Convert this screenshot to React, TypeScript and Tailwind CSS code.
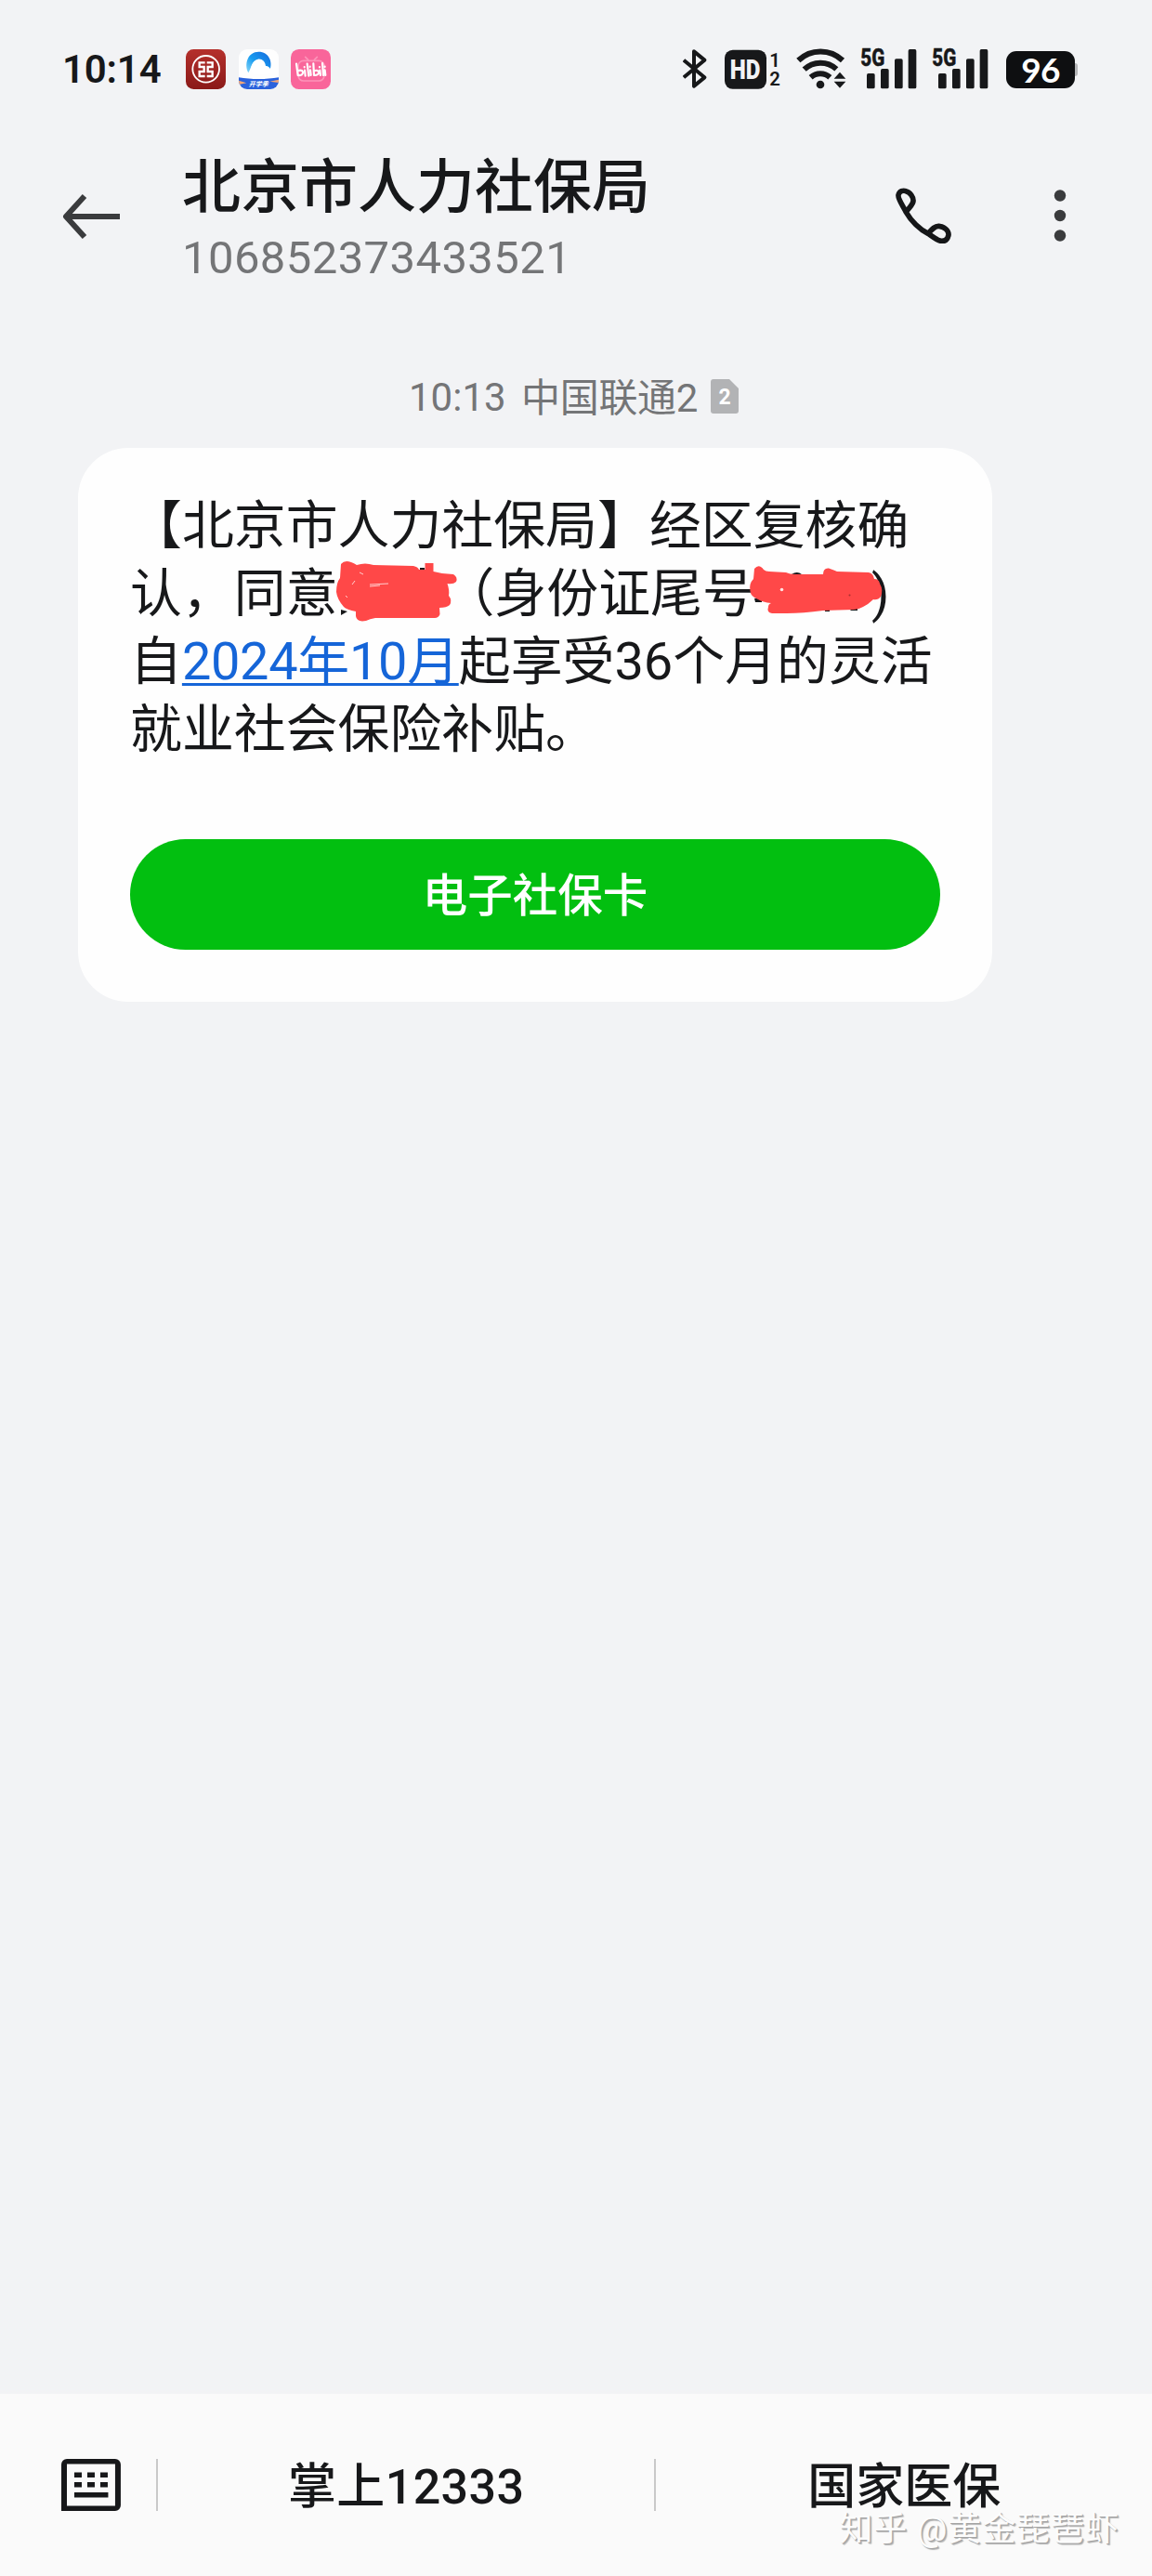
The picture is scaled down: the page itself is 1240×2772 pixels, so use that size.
import React from 'react';

function IcbcIcon() {
  return (
    <svg viewBox="0 0 129 129" className="w-[43px] h-[43px]">
      <defs>
        <linearGradient id="icbc" x1="0" y1="0" x2="0" y2="1">
          <stop offset="0" stopColor="#b5302c" />
          <stop offset="1" stopColor="#8a1a18" />
        </linearGradient>
      </defs>
      <rect width="129" height="129" rx="25" fill="url(#icbc)" />
      <circle cx="65" cy="64" r="43" fill="none" stroke="#fff" strokeWidth="5.500" />
      <g fill="none" stroke="#fff" strokeWidth="7">
        <path d="M62 43H44v14h15v15H44v15h18M68 43h18v14H71v15h15v15H68" />
      </g>
    </svg>
  );
}

function BrowserIcon() {
  return (
    <svg viewBox="0 0 129 129" className="w-[43px] h-[43px]">
      <defs>
        <linearGradient id="ring" x1="0" y1="1" x2="1" y2="0">
          <stop offset="0" stopColor="#8ad8f8" />
          <stop offset="0.45" stopColor="#189cf0" />
          <stop offset="1" stopColor="#1767dc" />
        </linearGradient>
        <clipPath id="browserClip">
          <rect width="129" height="129" rx="27" />
        </clipPath>
      </defs>
      <g clipPath="url(#browserClip)">
        <rect width="129" height="129" fill="#fefefe" />
        <path d="M31 76C16 47 30 8 64 8c33 0 46 32 37 57-5-8-9-10-14-11-2-15-12-24-25-22-20 4-21 28-31 44z" fill="url(#ring)" />
        <path d="M47 80c-12-12-8-42 14-44 12-1 21 7 23 19 11-2 19 5 19 14 0 9-7 13-15 13z" fill="#fff" />
        <path d="M0 91c40 7 89 7 129 0v38H0z" fill="#2a62dc" />
        <path d="M0 101l25 8-25 5zM129 98l-29 6 29 4z" fill="#f3a778" />
        <text x="64" y="120" textAnchor="middle" fontSize="21" fontWeight="700" fontStyle="italic" fill="#fff" fontFamily="'Noto Sans CJK SC', sans-serif">开学季</text>
      </g>
    </svg>
  );
}

function BiliIcon() {
  return (
    <svg viewBox="0 0 129 129" className="w-[43px] h-[43px]">
      <rect width="129" height="129" rx="26" fill="#f9659a" />
      <g fill="none" stroke="#fd94b9" strokeWidth="5" strokeLinecap="round">
        <path d="M47 25l9 9M85 25l-9 9" />
        <rect x="24" y="37" width="84" height="65" rx="17" />
      </g>
      <g fill="none" stroke="#fff" strokeWidth="6.500" strokeLinecap="round" strokeLinejoin="round">
        <path d="M18 47l5 37c10 2 18-4 16-11-2-5-9-6-17-3M45 68l2 18M53 47l5 39M63 67l2 17M44 57v1M62 56v1" />
        <path d="M73 46l2 38c11 1 17-6 15-11-2-5-8-6-15-3M94 68l2 16M102 45l3 39M110 67l2 17M93 57v1M110 56v1" />
      </g>
    </svg>
  );
}

function SignalIcon() {
  return (
    <svg viewBox="0 0 183 132" className="w-[61px] h-[44px] overflow-visible" fill="#17181a">
      <text x="1" y="56" fontSize="76" fontWeight="800" stroke="#17181a" strokeWidth="1.500" textLength="78" lengthAdjust="spacingAndGlyphs" fontFamily="Roboto, sans-serif">5G</text>
      <rect x="21" y="81" width="26" height="49" rx="5" />
      <rect x="66" y="66" width="26" height="64" rx="5" />
      <rect x="111" y="34" width="26" height="96" rx="5" />
      <rect x="155" y="3" width="26" height="127" rx="5" />
    </svg>
  );
}

function StatusBar() {
  return (
    <div className="flex items-center justify-between h-[44px] mt-[52px] pl-[67px] pr-20">
      <div className="flex items-center">
        <span className="w-[133px] pt-px text-[42px] leading-[44px] font-semibold tracking-[-0.2px] text-[#17181a]">10:14</span>
        <div className="flex items-center gap-[13.5px]">
          <IcbcIcon />
          <BrowserIcon />
          <BiliIcon />
        </div>
      </div>
      <div className="flex items-center">
        <svg viewBox="46 68 78 132" className="w-[26px] h-[44px]" fill="none" stroke="#17181a" strokeWidth="12" strokeLinejoin="round">
          <path d="M49 106L116 162L82 190V78L116 106L49 162" />
        </svg>
        <svg viewBox="0 0 180 132" className="w-[60px] h-[44px] ml-[19px]" fill="#17181a">
          <rect x="0" y="5" width="135" height="126" rx="26" />
          <text x="17" y="99" fontSize="86" fontWeight="900" fill="#f2f3f5" textLength="98" lengthAdjust="spacingAndGlyphs" fontFamily="Roboto, sans-serif">HD</text>
          <text x="145" y="59" fontSize="61" fontWeight="600" fontFamily="Roboto, sans-serif">1</text>
          <text x="145" y="120" fontSize="61" fontWeight="600" fontFamily="Roboto, sans-serif">2</text>
        </svg>
        <svg viewBox="411 66 162 132" className="w-[54px] h-[44px] ml-[17px]">
          <g fill="none" stroke="#17181a" strokeWidth="18">
            <path d="M418 105a103 103 0 0 1 143 0" />
            <path d="M437 134a76 76 0 0 1 104 -1" />
            <path d="M458 160a46 46 0 0 1 62 0" />
          </g>
          <circle cx="489" cy="183" r="13" fill="#17181a" />
          <path d="M552 143l19 21h-38zM552 194l19-21h-38z" fill="#17181a" />
        </svg>
        <div className="flex gap-4 ml-[15px]">
          <SignalIcon />
          <SignalIcon />
        </div>
        <div className="flex items-center ml-[19px] mt-[2px]">
          <div className="flex items-center justify-center w-[74px] h-10 rounded-[11px] bg-[#0e0f11] text-white text-[37px] leading-10 tracking-[-0.8px] font-bold font-['Lato',sans-serif]">
            96
          </div>
          <div className="w-[3px] h-[14px] rounded-r-sm bg-[#b4b5b7]" />
        </div>
      </div>
    </div>
  );
}

function Header() {
  return (
    <header className="flex h-[142px] mt-[69px] pl-[67px]">
      <svg viewBox="0 0 64 50" className="w-16 h-[50px] mt-[43px]" fill="none" stroke="#3a3b3d" strokeWidth="6">
        <path d="M62 25H5" />
        <path d="M24 3L4 25L24 47" strokeLinejoin="round" />
      </svg>
      <div className="w-[768px] ml-[65px] whitespace-nowrap">
        <h1 className="text-[63px] leading-[74px] font-medium text-[#17181a]">北京市人力社保局</h1>
        <p className="mt-[10px] text-[49px] leading-[58px] tracking-[0.4px] text-[#747577]">106852373433521</p>
      </div>
      <svg viewBox="135 95 180 180" className="w-[60px] h-[60px] mt-[37px]" fill="none" stroke="#151618" strokeWidth="17" strokeLinejoin="round">
        <path d="M169 174C155 148 142 130 144 119C147 105 160 103 168 106C182 109 193 126 192 138C191 152 178 158 169 174C185 202 213 230 240 243C250 232 260 218 275 219C292 220 307 234 306 247C303 263 294 269 281 267C268 264 256 254 240 243" />
      </svg>
      <svg viewBox="0 0 14 58" className="w-[14px] h-[58px] mt-[39px] ml-[110px]" fill="#3a3b3d">
        <circle cx="7" cy="6.500" r="6.200" />
        <circle cx="7" cy="28" r="6.200" />
        <circle cx="7" cy="49.500" r="6.200" />
      </svg>
    </header>
  );
}

function NameScribble() {
  return (
    <span className="relative inline-block w-[113px]">
      <svg viewBox="360 600 135 70" className="absolute left-[-4px] top-[-58px] w-[135px] h-[70px]">
        <path d="M367 656l7 2-7 4zM452 611h5v4h-5z" fill="#17181a" />
        <path
          fill="#ff4848"
          d="M367 607Q371 602 378 605Q381 606 384 608Q393 605 402 608L445 609Q450 610 451 613L457.500 613V606H466.500V615Q477 618 488 618Q493 621 491 626Q488 629 481.500 628Q484 635 483 641Q487 646 484 651Q481 654 473 654L473.500 661Q472 665 468 665H404Q398 666 394 668Q384 670 383 663V658Q373 656 370 653Q363 645 362 637Q362 627 366 622Z"
        />
        <path d="M387 616l4 2M398 629l20-1M398 631l11-1M372 641l2 2M382 625l-3 4" stroke="#ffd0d0" strokeWidth="1" fill="none" />
      </svg>
    </span>
  );
}

function IdScribble() {
  return (
    <span className="relative inline-block w-[126px]">
      <svg viewBox="806 606 148 58" className="absolute left-[-7px] top-[-52px] w-[148px] h-[58px]">
        <path d="M853 618q6-4 11 0zM813 644h8v4h-7zM889 655h5v3h-5zM915 655h9v2h-7z" fill="#17181a" />
        <path
          fill="#ff4848"
          d="M813 612Q818 606 823 613Q825 615 829 615L847 616Q851 618 857 618H887Q887 611 893 611.500Q898 613 902 615L936 616Q941 617 942 623Q947 623 948 628Q952 635 949 642Q946 646 941 645Q936 650 930 653Q925 656 920 656L887 657Q865 660 848 660H832Q826 659 828 653Q828 650 831 649Q822 648 817 645Q809 642 808.500 636Q807 628 812 623Z"
        />
        <circle cx="842.500" cy="634.500" r="1.800" fill="#ffe2e2" />
        <circle cx="915.500" cy="640.500" r="1" fill="#a83030" />
      </svg>
    </span>
  );
}

function MessageCard() {
  return (
    <div className="w-[984px] h-[596px] ml-[84px] pt-12 px-14 rounded-[54px] bg-[#fefefe]">
      <p className="text-[55.9px] leading-[73px] whitespace-nowrap text-[#17181a] [text-spacing-trim:space-all]">
        <span className="block">【北京市人力社保局】经区复核确</span>
        <span className="block">
          认，同意<NameScribble />（身份证尾号<IdScribble />)
        </span>
        <span className="block">
          自<span className="text-[#1565d8] underline decoration-[3px] underline-offset-[4px] [text-decoration-skip-ink:none] tracking-[-0.3px]">2024年10月</span>起享受36个月的灵活
        </span>
        <span className="block">就业社会保险补贴。</span>
      </p>
      <button className="block w-[872px] h-[119px] mt-[81px] pt-[2px] rounded-full bg-[#02bf10] text-white text-[48.5px] leading-[119px] font-medium">
        电子社保卡
      </button>
    </div>
  );
}

function BottomBar() {
  return (
    <footer className="flex items-center h-[196px] pl-[66px] bg-[#fafafa] text-[52px] leading-[62px] font-medium text-[#17181a]">
      <svg viewBox="0 0 64 56" className="w-16 h-14" fill="#17181a">
        <path d="M0 56V6a6 6 0 0 1 6-6h52a6 6 0 0 1 6 6v44a6 6 0 0 1-6 6zM6 5.500v45h52v-45z" fillRule="evenodd" />
        <path d="M14 14.500h8v5.500h-8zM28 14.500h8v5.500h-8zM42 14.500h8v5.500h-8zM14 25h8v5.500h-8zM28 25h8v5.500h-8zM42 25h8v5.500h-8zM14 36h36.500v5.500H14z" />
      </svg>
      <div className="w-[2.500px] h-14 ml-[38px] bg-[#c9c9c9]" />
      <div className="w-[534px] pt-[5px] text-center tracking-[0.4px]">掌上12333</div>
      <div className="w-[2.500px] h-14 bg-[#c9c9c9]" />
      <div className="relative w-[534px] pt-[5px] text-center">
        国家医保
        <span className="absolute left-[197px] top-[59px] text-[36px] leading-[44px] tracking-[0.9px] font-normal whitespace-nowrap text-[#fcfcfc] [text-shadow:1px_1px_0_#a4a4a4,2px_2px_1px_#b4b4b4]">
          知乎 @黄金琵琶虾
        </span>
      </div>
    </footer>
  );
}

export default function App() {
  return (
    <div className="flex flex-col w-[1240px] h-[2772px] overflow-hidden bg-[#f2f3f5] font-['Roboto','Noto_Sans_CJK_SC',sans-serif]">
      <StatusBar />
      <Header />
      <div className="flex mt-[96px] h-[50px] pl-[440px] text-[42px] leading-[50px] whitespace-pre text-[#747577]">
        <span className="w-[121px]">10:13</span>
        <span className="w-[204px] pt-px tracking-[-0.3px]">中国联通2</span>
        <svg viewBox="0 0 30 37" className="w-[30px] h-[37px] mt-[5px]">
          <path d="M3 0h17l10 10v24a3 3 0 0 1-3 3H3a3 3 0 0 1-3-3V3a3 3 0 0 1 3-3z" fill="#b2b3b5" />
          <text x="15" y="27" textAnchor="middle" fontSize="23" fontWeight="700" fill="#fff" fontFamily="Roboto, sans-serif">2</text>
        </svg>
      </div>
      <div className="grow pt-[29px]">
        <MessageCard />
      </div>
      <BottomBar />
    </div>
  );
}
